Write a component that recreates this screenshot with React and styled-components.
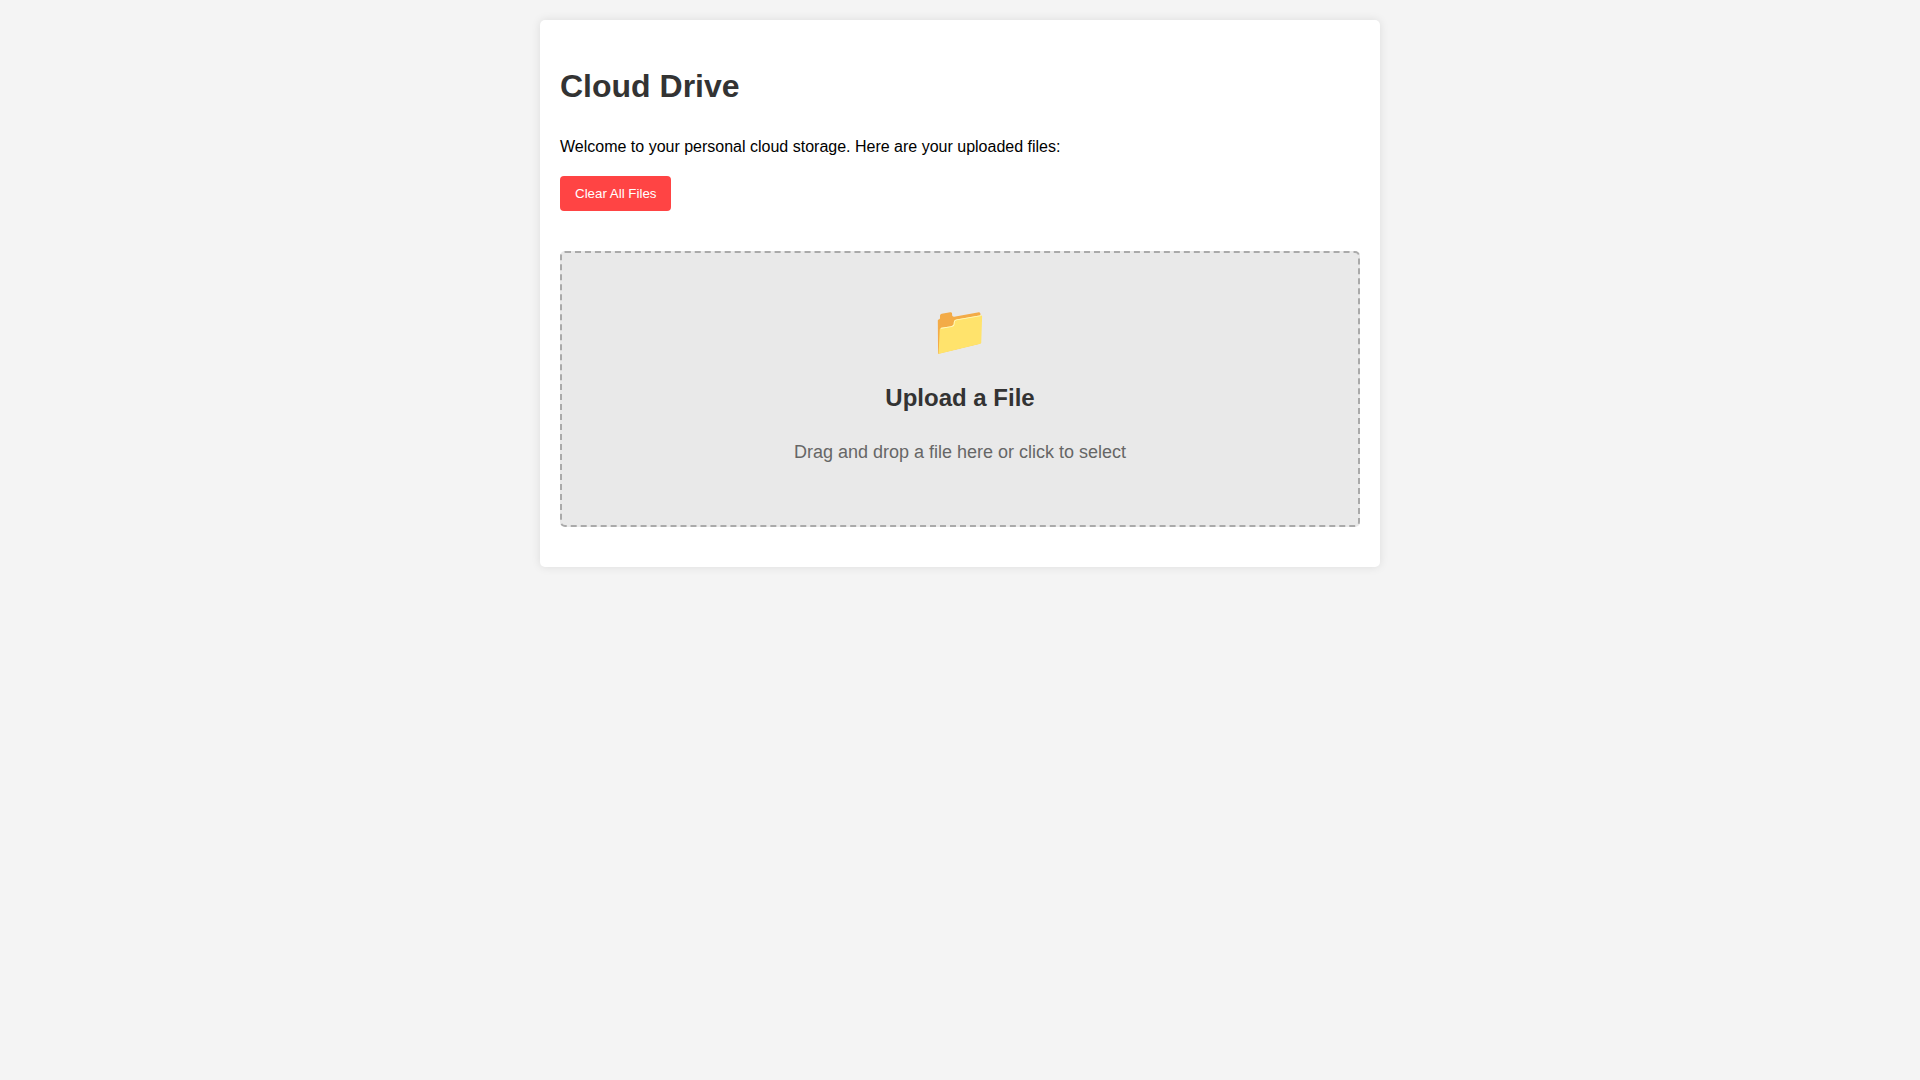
import React from "react";
import styled, { createGlobalStyle } from "styled-components";

const GlobalStyle = createGlobalStyle`
  body {
    margin: 0;
    padding: 20px;
    background: #f4f4f4;
    color: #000;
    font-family: Arial, "Liberation Sans", sans-serif;
    font-size: 16px;
    line-height: 26px;
  }
`;

const Card = styled.main`
  display: flow-root;
  max-width: 800px;
  margin: 0 auto;
  padding: 20px;
  background: #fff;
  border-radius: 5px;
  box-shadow: 0 0 10px rgba(0, 0, 0, 0.1);
`;

const Title = styled.h1`
  margin: 21px 0 22px;
  color: #333;
  font-size: 32px;
  line-height: 51px;
`;

const Intro = styled.p`
  margin: 16px 0;
`;

const ClearButton = styled.button`
  display: block;
  margin-bottom: 20px;
  padding: 10px 15px;
  border: none;
  border-radius: 4px;
  background: #ff4444;
  color: #fff;
  font-family: inherit;
  cursor: pointer;
`;

const DropZone = styled.label`
  display: block;
  margin: 40px 0 20px;
  padding: 40px;
  border: 2px dashed #aaa;
  border-radius: 5px;
  background: #e9e9e9;
  text-align: center;
  cursor: pointer;
`;

const FileInput = styled.input`
  display: none;
`;

const DropIcon = styled.div`
  margin-bottom: 10px;
  font-size: 48px;
  line-height: 76px;
`;

const DropTitle = styled.h2`
  margin: 0 0 21px;
  color: #333;
  font-size: 24px;
  line-height: 38px;
`;

const DropHint = styled.p`
  margin: 0 0 18px;
  color: #666;
  font-size: 18px;
  line-height: 29px;
`;

export default function App() {
  return (
    <>
      <GlobalStyle />
      <Card>
        <Title>Cloud Drive</Title>
        <Intro>Welcome to your personal cloud storage. Here are your uploaded files:</Intro>
        <ClearButton type="button">Clear All Files</ClearButton>
        <DropZone htmlFor="file">
          <DropIcon aria-hidden="true">📁</DropIcon>
          <DropTitle>Upload a File</DropTitle>
          <DropHint>Drag and drop a file here or click to select</DropHint>
          <FileInput id="file" type="file" />
        </DropZone>
      </Card>
    </>
  );
}
